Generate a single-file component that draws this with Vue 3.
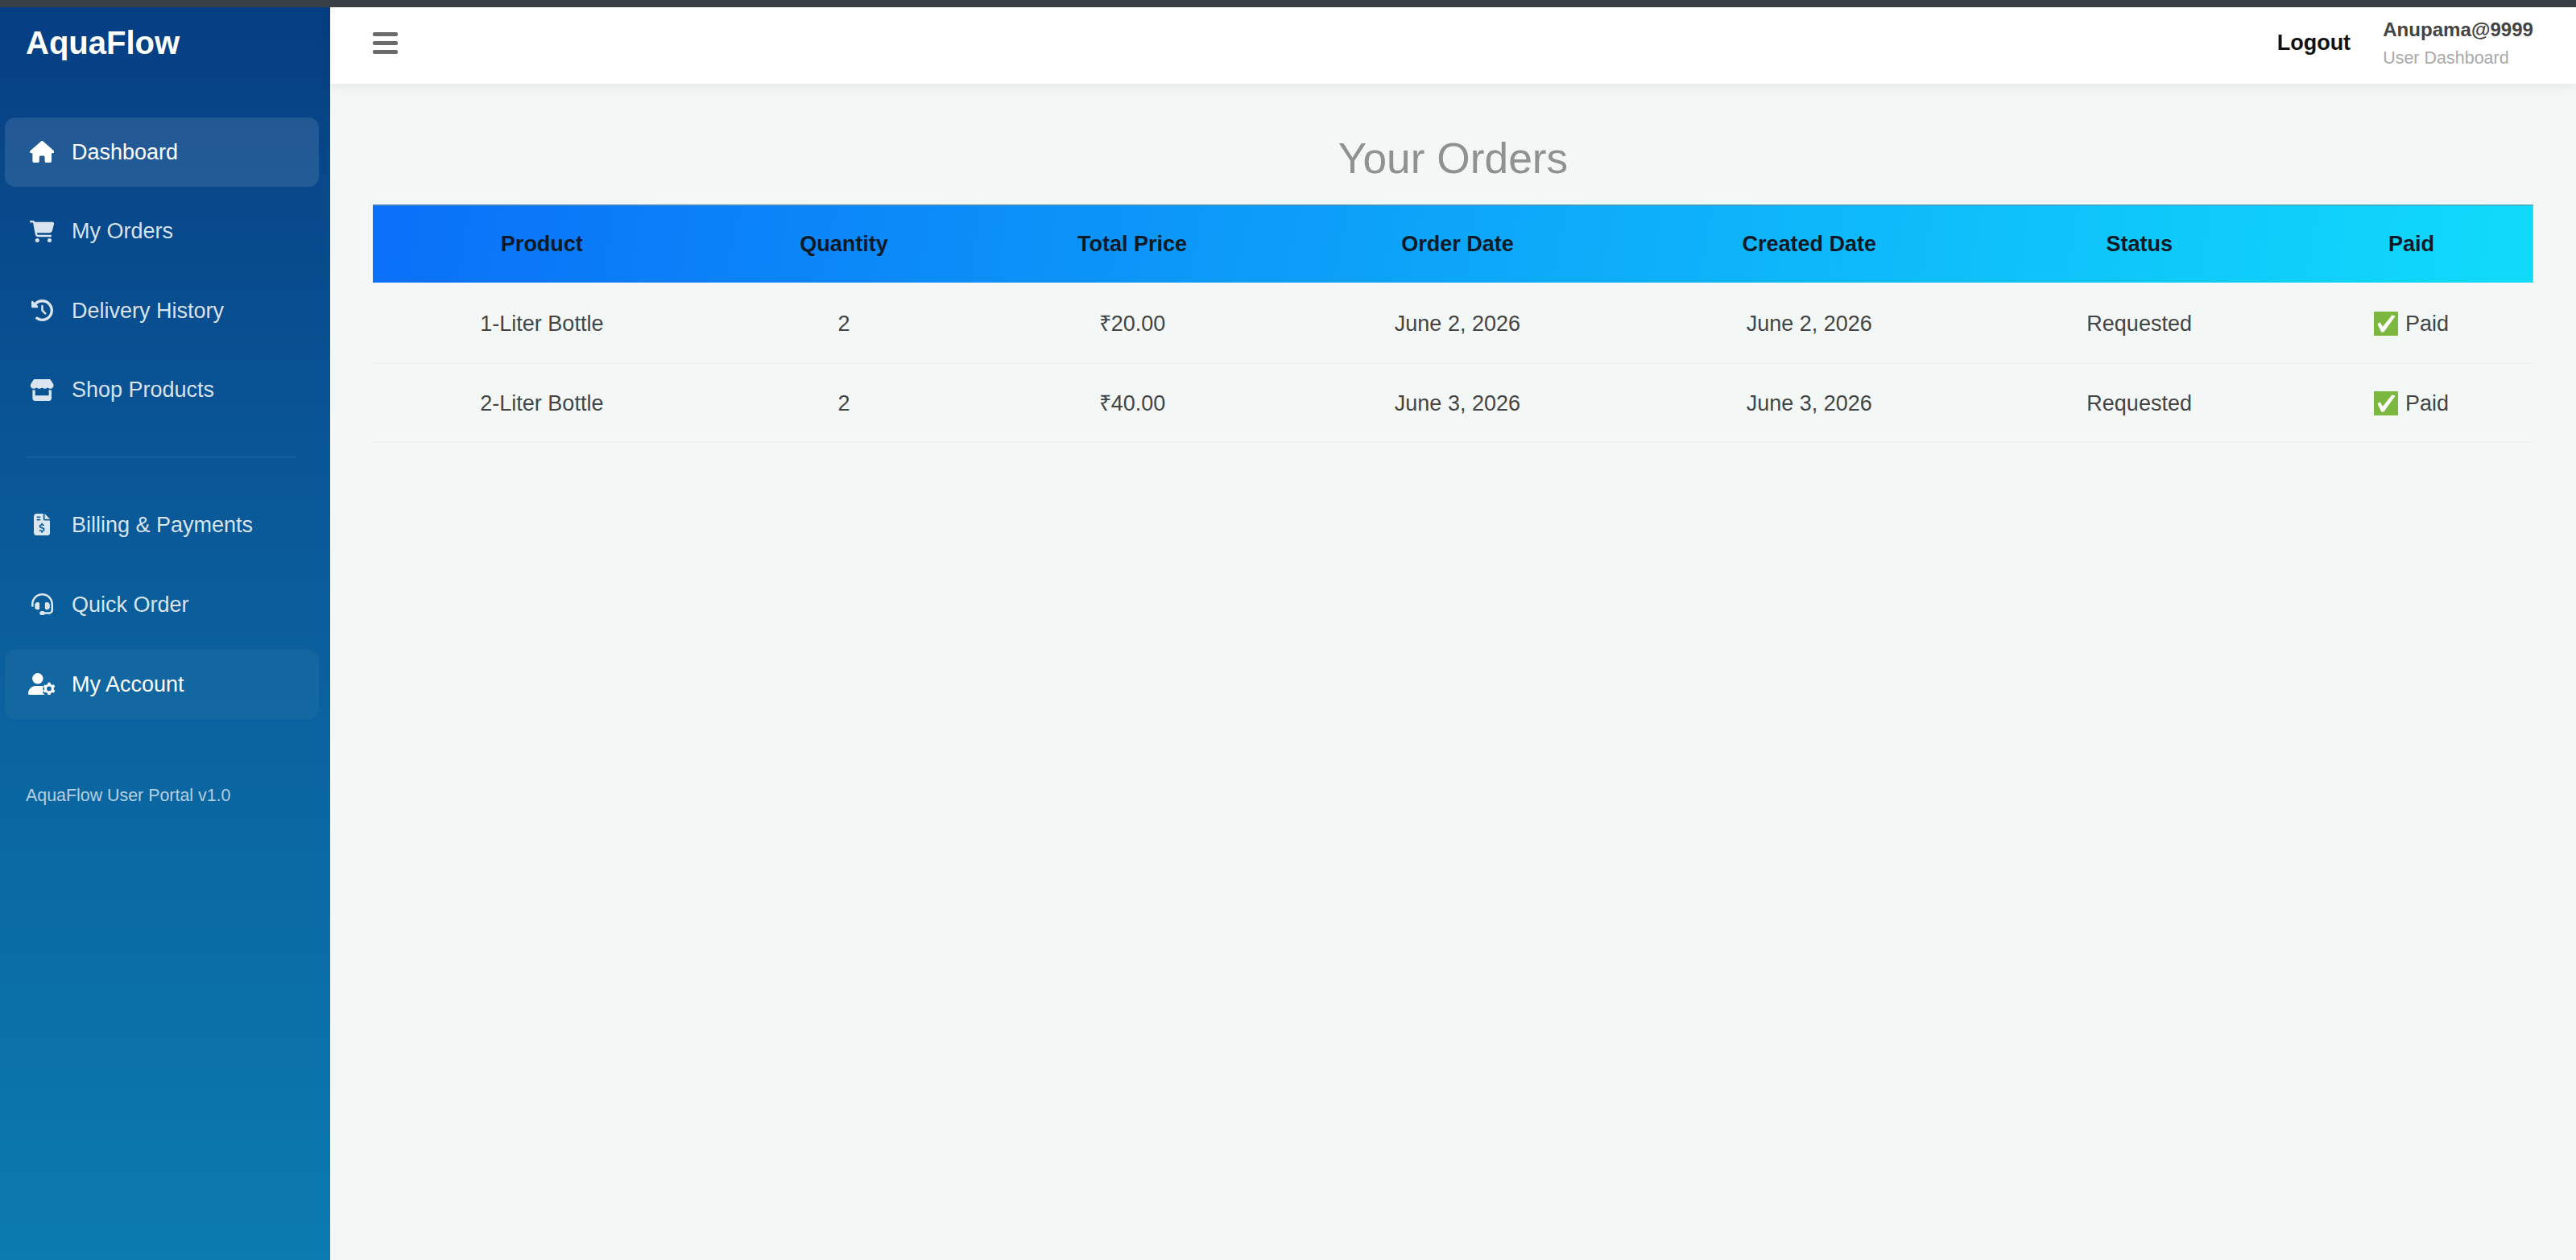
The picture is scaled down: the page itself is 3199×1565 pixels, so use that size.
<template>
    <div class="page">
        <div class="window-edge"></div>

        <div class="layout">
            <!-- Sidebar -->
            <aside class="sidebar">
                <div class="brand">AquaFlow</div>

                <nav class="menu">
                    <a v-for="item in mainMenu" :key="item.label" :class="['menu-item', item.state]">
                        <span class="menu-icon">
                            <svg :viewBox="`0 0 ${item.width} 512`"><path :d="item.path" /></svg>
                        </span>
                        <span class="menu-text">{{ item.label }}</span>
                    </a>
                </nav>

                <div class="divider"></div>

                <nav class="menu">
                    <a v-for="item in accountMenu" :key="item.label" :class="['menu-item', item.state]">
                        <span class="menu-icon">
                            <svg :viewBox="`0 0 ${item.width} 512`">
                                <path :d="item.path" />
                                <g v-if="item.gear" class="gear">
                                    <circle cx="492" cy="368" r="84" />
                                    <path d="M492 270v-46M492 466v46M577 319l40-23M407 417l-34 20M577 417l40 23M407 319l-34-20" />
                                </g>
                            </svg>
                        </span>
                        <span class="menu-text">{{ item.label }}</span>
                    </a>
                </nav>

                <div class="sidebar-footer">AquaFlow User Portal v1.0</div>
            </aside>

            <div class="main">
                <!-- Topbar -->
                <header class="topbar">
                    <button class="toggle" aria-label="Menu">
                        <span></span>
                        <span></span>
                        <span></span>
                    </button>
                    <div class="user-area">
                        <a class="logout">Logout</a>
                        <div class="user-info">
                            <div class="user-name">Anupama@9999</div>
                            <div class="user-role">User Dashboard</div>
                        </div>
                    </div>
                </header>

                <!-- Orders -->
                <main class="content">
                    <h2 class="title">Your Orders</h2>
                    <table class="orders">
                        <colgroup>
                            <col v-for="col in columns" :key="col.label" :style="{ width: col.width + '%' }">
                        </colgroup>
                        <thead>
                            <tr>
                                <th v-for="col in columns" :key="col.label">{{ col.label }}</th>
                            </tr>
                        </thead>
                        <tbody>
                            <tr v-for="order in orders" :key="order.product">
                                <td>{{ order.product }}</td>
                                <td>{{ order.quantity }}</td>
                                <td>{{ formatPrice(order.total) }}</td>
                                <td>{{ order.orderDate }}</td>
                                <td>{{ order.createdDate }}</td>
                                <td>{{ order.status }}</td>
                                <td>
                                    <span class="paid">
                                        <svg class="check" viewBox="0 0 30 30">
                                            <rect width="30" height="30" rx="1" fill="#7cb83f" />
                                            <path d="M4.5 15.5l3-2.200 3.500 5.500L22.500 4.500l4.200 1L12.300 25.500H9.300z" fill="#fff" />
                                        </svg>
                                        <span>Paid</span>
                                    </span>
                                </td>
                            </tr>
                        </tbody>
                    </table>
                </main>
            </div>
        </div>
    </div>
</template>

<script setup>
import { ref } from 'vue'

const mainMenu = ref([
    {
        label: 'Dashboard',
        state: 'active',
        width: 576,
        path: 'M575.8 255.5c0 18-15 32.1-32 32.1h-32l.7 160.2c0 2.7-.2 5.4-.5 8.1V472c0 22.1-17.9 40-40 40H456c-1.1 0-2.2 0-3.3-.1c-1.4 .1-2.8 .1-4.2 .1H416 392c-22.1 0-40-17.9-40-40V448 384c0-17.7-14.3-32-32-32H256c-17.7 0-32 14.3-32 32v64 24c0 22.1-17.9 40-40 40H160 128.1c-1.5 0-3-.1-4.5-.2c-1.2 .1-2.4 .2-3.6 .2H104c-22.1 0-40-17.9-40-40V360c0-.9 0-1.9 .1-2.8V287.6H32c-18 0-32-14-32-32.1c0-9 3-17 10-24L266.4 8c7-7 15-8 22-8s15 2 21 7L564.8 231.5c8 7 12 15 11 24z',
    },
    {
        label: 'My Orders',
        width: 576,
        path: 'M0 24C0 10.7 10.7 0 24 0H69.5c22 0 41.5 12.8 50.6 32h411c26.3 0 45.5 25 38.6 50.4l-41 152.3c-8.5 31.4-37 53.3-69.5 53.3H170.7l5.4 28.5c2.2 11.3 12.1 19.5 23.6 19.5H488c13.3 0 24 10.7 24 24s-10.7 24-24 24H199.7c-34.6 0-64.3-24.6-70.7-58.5L77.4 54.5c-.7-3.8-4-6.5-7.9-6.5H24C10.7 48 0 37.3 0 24zM128 464a48 48 0 1 1 96 0 48 48 0 1 1 -96 0zm336-48a48 48 0 1 1 0 96 48 48 0 1 1 0-96z',
    },
    {
        label: 'Delivery History',
        width: 512,
        path: 'M75 75L41 41C25.9 25.9 0 36.6 0 57.9V168c0 13.3 10.7 24 24 24H134.1c21.4 0 32.1-25.9 17-41l-30.8-30.8C155 85.5 203 64 256 64c106 0 192 86 192 192s-86 192-192 192c-40.8 0-78.6-12.7-109.7-34.4c-14.5-10.1-34.4-6.6-44.6 7.9s-6.6 34.4 7.9 44.6C151.2 495 201.7 512 256 512c141.4 0 256-114.6 256-256S397.4 0 256 0C185.3 0 121.3 28.7 75 75zm181 53c-13.3 0-24 10.7-24 24V256c0 6.4 2.5 12.5 7 17l72 72c9.4 9.4 24.6 9.4 33.9 0s9.4-24.6 0-33.9l-65-65V152c0-13.3-10.7-24-24-24z',
    },
    {
        label: 'Shop Products',
        width: 576,
        path: 'M547.6 103.8L490.3 13.1C485.2 5 476.1 0 466.4 0H109.6C99.9 0 90.8 5 85.7 13.1L28.3 103.8c-29.6 46.8-3.4 111.9 51.9 119.4c4 .5 8.1 .8 12.1 .8c26.1 0 49.3-11.4 65.2-29c15.9 17.6 39.1 29 65.2 29c26.1 0 49.3-11.4 65.2-29c15.9 17.6 39.1 29 65.2 29c26.2 0 49.3-11.4 65.2-29c16 17.6 39.1 29 65.2 29c4.1 0 8.1-.3 12.1-.8c55.5-7.4 81.8-72.5 52.1-119.4zM499.7 254.9c-5.3 .7-10.7 1.1-16.2 1.1c-12.4 0-24.3-1.9-35.4-5.3V384H128V250.6c-11.2 3.5-23.2 5.4-35.6 5.4c-5.5 0-11-.4-16.3-1.1l-.1 0c-4.1-.6-8.1-1.3-12-2.3V384v64c0 35.3 28.7 64 64 64H448c35.3 0 64-28.7 64-64V384 252.6c-4 1-8 1.8-12.3 2.3z',
    },
])

const accountMenu = ref([
    {
        label: 'Billing & Payments',
        width: 384,
        path: 'M64 0C28.7 0 0 28.7 0 64V448c0 35.3 28.7 64 64 64H320c35.3 0 64-28.7 64-64V160H256c-17.7 0-32-14.3-32-32V0H64zM256 0V128H384L256 0zM64 80c0-8.8 7.2-16 16-16h64c8.8 0 16 7.2 16 16s-7.2 16-16 16H80c-8.8 0-16-7.2-16-16zm0 64c0-8.8 7.2-16 16-16h64c8.8 0 16 7.2 16 16s-7.2 16-16 16H80c-8.8 0-16-7.2-16-16zm128 72c8.8 0 16 7.2 16 16v17.3c8.5 1.2 16.7 3.1 24.1 5.1c8.5 2.3 13.6 11 11.3 19.6s-11 13.6-19.6 11.3c-11.1-3-22-5.2-32.1-5.3c-8.4-.1-17.4 1.8-23.6 5.5c-5.7 3.4-8.1 7.3-8.1 12.8c0 3.7 1.3 6.5 7.3 10.1c6.9 4.1 16.6 7.1 29.2 10.9l.5 .1c11.3 3.4 25.3 7.6 36.3 14.6c12.1 7.6 22.4 19.7 22.7 38.2c.3 19.3-9.6 33.3-22.9 41.6c-7.7 4.8-16.4 7.6-25.1 9.1V440c0 8.8-7.2 16-16 16s-16-7.2-16-16V422.2c-11.2-2.1-21.7-5.7-30.9-8.9c-2.1-.7-4.2-1.4-6.2-2.1c-8.4-2.8-12.9-11.9-10.1-20.2s11.9-12.9 20.2-10.1c2.5 .8 4.8 1.6 7.1 2.4c13.6 4.6 24.6 8.4 36.3 8.7c9.1 .3 17.9-1.7 23.7-5.3c5.1-3.2 7.9-7.3 7.8-14c-.1-4.6-1.8-7.8-7.7-11.6c-6.8-4.3-16.5-7.4-29-11.2l-1.6-.5c-11-3.3-24.3-7.3-34.8-13.7c-12-7.2-22.6-18.9-22.7-37.3c-.1-19.4 10.8-32.8 23.8-40.5c7.5-4.4 15.8-7.2 24.1-8.7V232c0-8.8 7.2-16 16-16z',
    },
    {
        label: 'Quick Order',
        width: 512,
        path: 'M256 48C141.1 48 48 141.1 48 256v40c0 13.3-10.7 24-24 24s-24-10.7-24-24V256C0 114.6 114.6 0 256 0S512 114.6 512 256V400.1c0 48.6-39.4 88-88.1 88L313.6 488c-8.3 14.3-23.8 24-41.6 24H240c-26.5 0-48-21.5-48-48s21.5-48 48-48h32c17.8 0 33.3 9.7 41.6 24l110.4 .1c22.1 0 40-17.9 40-40V256c0-114.9-93.1-208-208-208zM144 208h16c17.7 0 32 14.3 32 32V352c0 17.7-14.3 32-32 32H144c-35.3 0-64-28.7-64-64V272c0-35.3 28.7-64 64-64zm224 0c35.3 0 64 28.7 64 64v48c0 35.3-28.7 64-64 64H352c-17.7 0-32-14.3-32-32V240c0-17.7 14.3-32 32-32h16z',
    },
    {
        label: 'My Account',
        state: 'hovered',
        width: 640,
        gear: true,
        path: 'M224 256a128 128 0 1 0 0-256 128 128 0 1 0 0 256zM178.3 304C79.8 304 0 383.8 0 482.3C0 498.7 13.3 512 29.7 512H392c-16-10-34-28-44-48c-8-18 4-34 14-42c-20-30-20-78 0-108c-22-8-62-10-92.300-10z',
    },
])

const columns = ref([
    { label: 'Product', width: 15.57 },
    { label: 'Quantity', width: 12.4 },
    { label: 'Total Price', width: 14.28 },
    { label: 'Order Date', width: 15.83 },
    { label: 'Created Date', width: 16.73 },
    { label: 'Status', width: 13.83 },
    { label: 'Paid', width: 11.36 },
])

const orders = ref([
    {
        product: '1-Liter Bottle',
        quantity: 2,
        total: 20,
        orderDate: 'June 2, 2026',
        createdDate: 'June 2, 2026',
        status: 'Requested',
    },
    {
        product: '2-Liter Bottle',
        quantity: 2,
        total: 40,
        orderDate: 'June 3, 2026',
        createdDate: 'June 3, 2026',
        status: 'Requested',
    },
])

const formatPrice = (price) => `₹${price.toFixed(2)}`
</script>

<style>
body {
    margin: 0;
    overflow: hidden;
}
</style>

<style scoped>
.page {
    display: flex;
    flex-direction: column;
    height: 100vh;
    background: #f3f8f7;
    font-family: "Liberation Sans", Arial, sans-serif;
    font-size: 27px;
    color: #444;
}

.window-edge {
    flex: none;
    height: 9px;
    background: #364045;
}

.layout {
    flex: 1;
    display: flex;
    min-height: 0;
}

/* Sidebar */
.sidebar {
    flex: none;
    width: 410px;
    box-sizing: border-box;
    background: linear-gradient(180deg, #063e83 0%, #0a5a99 42%, #0b7bb0 100%);
    color: #fff;
}

.brand {
    height: 90px;
    line-height: 89px;
    margin-bottom: 46.600px;
    padding-left: 32px;
    font-size: 40px;
    font-weight: 700;
}

.menu {
    display: flex;
    flex-direction: column;
    gap: 12.600px;
    padding: 0 14px 0 6px;
}

.divider + .menu {
    gap: 13px;
}

.menu-item {
    display: flex;
    align-items: center;
    height: 86px;
    box-sizing: border-box;
    padding-left: 26px;
    border-radius: 13px;
    color: rgba(255, 255, 255, 0.85);
}

.menu-item.active {
    background: rgba(255, 255, 255, 0.11);
    color: #fff;
}

.menu-item.hovered {
    background: rgba(255, 255, 255, 0.04);
    color: #fff;
}

.menu-icon {
    display: flex;
    justify-content: center;
    width: 40px;
    margin-right: 17px;
}

.menu-icon svg {
    height: 27px;
    fill: currentColor;
}

.menu-text {
    padding-top: 1px;
}

.gear circle {
    fill: none;
    stroke: currentColor;
    stroke-width: 60;
}

.gear path {
    stroke: currentColor;
    stroke-width: 66;
}

.divider {
    height: 2px;
    margin: 40px 40px 39.500px 33px;
    background: rgba(255, 255, 255, 0.05);
}

.sidebar-footer {
    margin-top: 83px;
    padding-left: 32px;
    font-size: 21.400px;
    line-height: 25px;
    color: rgba(255, 255, 255, 0.7);
}

/* Topbar */
.main {
    flex: 1;
    min-width: 0;
}

.topbar {
    display: flex;
    align-items: center;
    justify-content: space-between;
    height: 95px;
    box-sizing: border-box;
    padding: 0 53px;
    background: #fff;
    box-shadow: 0 3px 14px rgba(0, 0, 0, 0.07);
}

.toggle {
    display: flex;
    flex-direction: column;
    gap: 6px;
    padding: 0;
    margin-bottom: 6px;
    border: 0;
    background: none;
}

.toggle span {
    width: 31px;
    height: 5px;
    border-radius: 2px;
    background: #6a6a6a;
}

.user-area {
    display: flex;
    align-items: center;
    gap: 40px;
}

.logout {
    margin-bottom: 6px;
    font-weight: 700;
    color: #111;
}

.user-info {
    margin-bottom: 6px;
}

.user-name {
    font-size: 24.100px;
    line-height: 36px;
    font-weight: 700;
    color: #444;
}

.user-role {
    font-size: 21.500px;
    line-height: 34px;
    color: #a9a9a9;
}

/* Orders */
.content {
    padding: 62px 53px 0;
}

.title {
    margin: 0;
    height: 88px;
    line-height: 61px;
    font-size: 53.300px;
    font-weight: 400;
    text-align: center;
    color: #8f9291;
}

.orders {
    width: 100%;
    table-layout: fixed;
    border-collapse: separate;
    border-spacing: 0;
    line-height: 32px;
    text-align: center;
}

.orders thead {
    background: linear-gradient(100deg, #0a70f8, #10dbfb);
    box-shadow: inset 0 2px rgba(110, 140, 150, 0.5);
}

.orders th {
    height: 97px;
    padding: 0 0 0 2px;
    box-sizing: border-box;
    color: #0b1a26;
}

.orders td {
    height: 98px;
    padding: 2px 0 0 2px;
    box-sizing: border-box;
    border-bottom: 2px solid #edf1f0;
}

.orders tbody tr:first-child td {
    height: 101px;
}

.paid {
    display: flex;
    align-items: center;
    justify-content: center;
    gap: 9px;
}

.check {
    width: 30px;
    height: 30px;
}
</style>
